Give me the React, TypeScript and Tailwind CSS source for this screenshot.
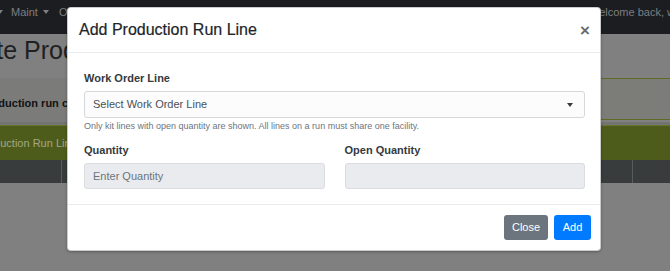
// App.tsx - Add Production Run Line modal over the production run page

function Caret({ className = '' }: { className?: string }) {
  return (
    <span
      className={`inline-block h-0 w-0 border-x-[3.5px] border-t-[4px] border-x-transparent border-t-current ${className}`}
    />
  )
}

function PageBehind() {
  return (
    <div className="flex flex-col">
      <nav className="h-[34px] bg-[#1b1d20] text-[11px] text-[#7d7f82]">
        <div className="flex h-[24px] items-center whitespace-nowrap">
          <div className="flex w-[589px] shrink-0 items-center">
            <Caret className="ml-[-3px]" />
            <span className="ml-[8px]">Maint</span>
            <Caret className="ml-[5px]" />
            <span className="ml-[10px]">Operations</span>
            <Caret className="ml-[5px]" />
          </div>
          <span className="shrink-0">Welcome back, warehouse</span>
        </div>
      </nav>
      <div className="h-[44px] whitespace-nowrap pt-[1px]">
        <h1 className="ml-[-58px] text-[25px] leading-[30px] text-[#1f2022]">Create Production Run</h1>
      </div>
      <div className="flex h-[44px]">
        <div className="flex flex-1 items-center bg-[#7b7b79] pt-[6px]">
          <span className="ml-[-20px] whitespace-nowrap text-[11px] font-bold text-[#111214]">
            Production run configuration
          </span>
        </div>
        <div className="mb-[2px] w-[69px] border-y border-[#5d6b25] bg-[#7c7c78]" />
      </div>
      <div className="h-[3px] bg-[#737373]" />
      <div className="flex h-[35px] items-center border-t border-[#65772a] bg-[#4e5c1b]">
        <span className="ml-[-23px] whitespace-nowrap text-[11px] text-[#a2a785]">Production Run Lines</span>
      </div>
      <div className="flex h-[23px] bg-[#383c3d]">
        <div className="w-[62px] border-r border-[#575c5d]" />
        <div className="flex-1" />
        <div className="w-[38px] border-l border-[#575c5d]" />
      </div>
    </div>
  )
}

export default function App() {
  return (
    <div className="relative h-[271px] w-[670px] overflow-hidden bg-[#808080] font-['Liberation_Sans',Arial,sans-serif]">
      <PageBehind />

      <div className="absolute left-[67px] top-[7px] flex h-[244px] w-[534px] flex-col rounded-[4px] border border-black/20 bg-white shadow-[0_1px_3px_rgba(0,0,0,0.3)]">
        <div className="flex h-[45px] items-center justify-between border-b border-[#e9ecef] pl-[11px] pr-[10px]">
          <h5 className="text-[16px] text-[#212529] [-webkit-text-stroke:0.2px_#212529]">Add Production Run Line</h5>
          <span className="text-[17px] font-bold leading-none text-[#6b6b6b]">×</span>
        </div>

        <div className="flex flex-col pb-[15px] pl-[16px] pr-[15px] pt-[16px]">
          <label className="mb-[4px] block h-[18px] text-[11px] font-bold leading-[18px] text-[#343a40]">
            Work Order Line
          </label>
          <div className="flex h-[27px] items-center justify-between rounded-[3px] border border-[#d5d8db] bg-[#fcfcfc] pl-[8px] pr-[11px]">
            <span className="text-[11px] text-[#495057]">Select Work Order Line</span>
            <svg width="6" height="4" viewBox="0 0 6 4">
              <path d="M0 0h6L3 4z" fill="#343a40" />
            </svg>
          </div>
          <p className="mt-[1px] h-[14px] text-[9px] leading-[14px] text-[#6c757d]">
            Only kit lines with open quantity are shown. All lines on a run must share one facility.
          </p>

          <div className="mt-[8px] grid grid-cols-2 gap-[20px]">
            <div className="flex flex-col">
              <label className="mb-[4px] h-[18px] text-[11px] font-bold leading-[18px] text-[#343a40]">
                Quantity
              </label>
              <div className="flex h-[26px] items-center rounded-[3px] border border-[#dadde0] bg-[#e9ebee] pl-[8px]">
                <span className="text-[11px] text-[#6c757d]">Enter Quantity</span>
              </div>
            </div>
            <div className="flex flex-col">
              <label className="mb-[4px] h-[18px] text-[11px] font-bold leading-[18px] text-[#343a40]">
                Open Quantity
              </label>
              <div className="h-[26px] rounded-[3px] border border-[#dadde0] bg-[#e9ebee]" />
            </div>
          </div>
        </div>

        <div className="flex flex-1 items-center justify-end gap-[6px] border-t border-[#e9ecef] pr-[9px]">
          <button className="h-[25px] w-[44px] rounded-[3px] bg-[#6c757d] text-[11px] text-white">Close</button>
          <button className="h-[25px] w-[37px] rounded-[3px] bg-[#007bff] text-[11px] text-white">Add</button>
        </div>
      </div>
    </div>
  )
}
